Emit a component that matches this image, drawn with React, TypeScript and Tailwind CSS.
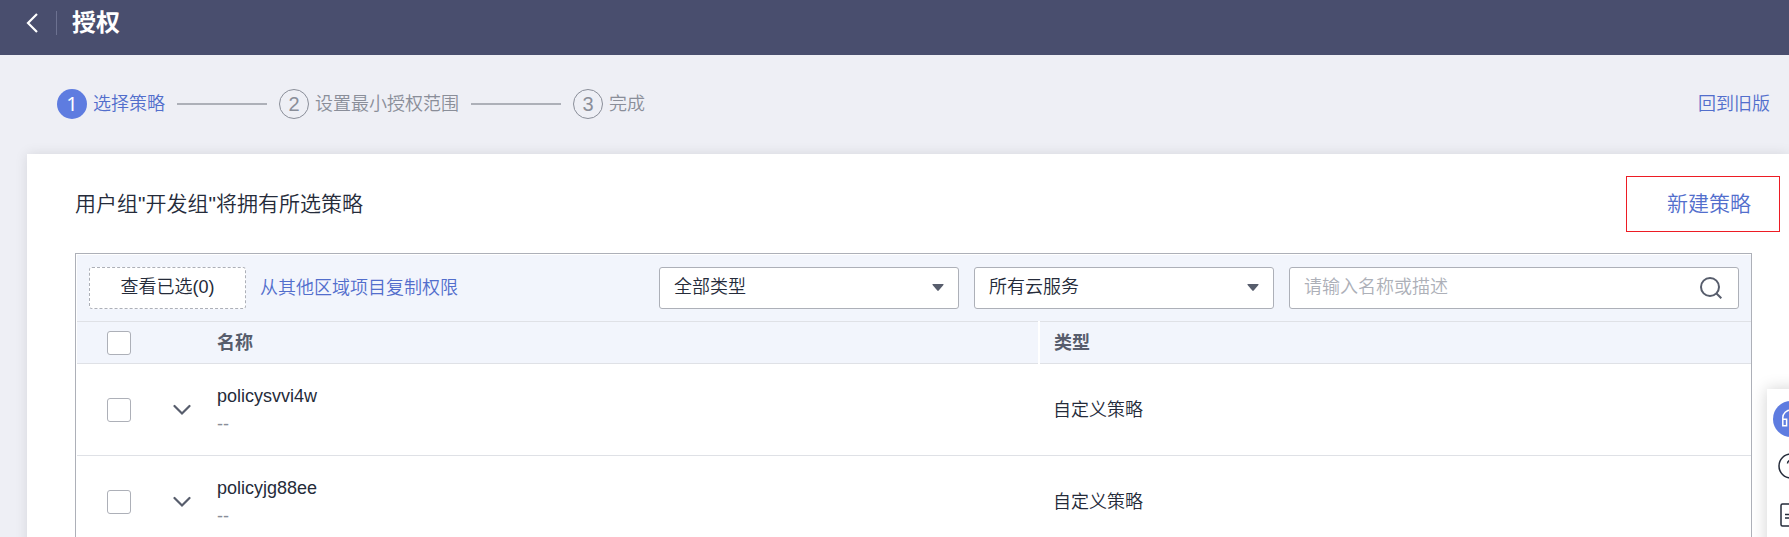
import React from "react";

const policies = [
  { name: "policysvvi4w", description: "--", type: "自定义策略" },
  { name: "policyjg88ee", description: "--", type: "自定义策略" },
];

const steps = ["选择策略", "设置最小授权范围", "完成"];

function Checkbox({ label }: { label: string }) {
  return (
    <input
      type="checkbox"
      aria-label={label}
      className="block size-6 appearance-none rounded-[3px] border border-[#adb0b8] bg-white checked:border-[#5e7ce0] checked:bg-[#5e7ce0]"
    />
  );
}

function Filter({ label, value }: { label: string; value: string }) {
  return (
    <div className="relative w-[300px] min-w-0">
      <select
        aria-label={label}
        className="h-[42px] w-full appearance-none rounded-[3px] border border-[#adb0b8] bg-white pr-10 pb-0.5 pl-3.5 text-[#252b3a]"
      >
        <option>{value}</option>
      </select>
      <svg
        className="pointer-events-none absolute top-[17px] right-[15px] h-[7px] w-3"
        viewBox="0 0 12 7"
        fill="#575d6c"
      >
        <path d="M1 0h10q1 0 .4.9L6.7 6.5q-.7.8-1.4 0L.6.9Q0 0 1 0Z" />
      </svg>
    </div>
  );
}

function Steps() {
  return (
    <ol className="flex items-center gap-3">
      {steps.map((step, i) => (
        <React.Fragment key={step}>
          {i > 0 && <li aria-hidden="true" className="h-0.5 w-[90px] bg-[#adb0b8]" />}
          <li
            className={
              i === 0
                ? "flex items-center gap-1.5 text-[#526ecc]"
                : "flex items-center gap-1.5 text-[#8a8e99]"
            }
          >
            <span
              className={
                i === 0
                  ? "flex size-[30px] items-center justify-center rounded-full bg-[#5e7ce0] font-['Noto_Sans',sans-serif] text-xl leading-none font-normal text-white"
                  : "flex size-[30px] items-center justify-center rounded-full border border-[#8a8e99] text-xl leading-none"
              }
            >
              {i + 1}
            </span>
            <span>{step}</span>
          </li>
        </React.Fragment>
      ))}
    </ol>
  );
}

function SideTools() {
  return (
    <aside className="fixed top-[389px] -right-[26px] flex h-[180px] w-12 flex-col items-center bg-white pt-3 text-[#252b3a] shadow-[0_0_16px_rgba(0,0,0,0.18)]">
      <button
        aria-label="客服"
        className="flex size-9 items-center justify-center rounded-full bg-[#5e7ce0] text-white"
      >
        <svg className="size-5" viewBox="0 0 20 20" fill="none" stroke="currentColor" strokeWidth="1.5">
          <path d="M1.8 16.5V8.8a8.2 7.8 0 0 1 16.4 0v7.7M1.8 10.2h3.8v6.6H1.8zM14.4 10.2h3.8v6.6h-3.8z" />
        </svg>
      </button>
      <button aria-label="帮助" className="mt-4">
        <svg className="size-[26px]" viewBox="0 0 26 26" fill="none" stroke="currentColor" strokeWidth="1.5">
          <circle cx="13" cy="13" r="12" />
          <path d="M9.5 10.5a3.5 3.5 0 1 1 5.6 2.8c-1.3.9-2.1 1.5-2.1 3.2M13 18.5V20" />
        </svg>
      </button>
      <button aria-label="反馈" className="mt-6">
        <svg className="h-6 w-[22px]" viewBox="0 0 22 24" fill="none" stroke="currentColor" strokeWidth="1.5">
          <rect x="1" y="1" width="20" height="22" rx="1.5" />
          <path d="M5 11.5h8M5 15h8" />
        </svg>
      </button>
    </aside>
  );
}

export default function App() {
  return (
    <div className="flex h-screen flex-col overflow-hidden bg-[#eeeff5] font-['Liberation_Sans','Noto_Sans_CJK_SC',sans-serif] text-lg leading-7 font-[350] text-[#252b3a]">
      <header className="flex h-[55px] shrink-0 items-center bg-[#494e6e] pb-2.5 pl-[26px] text-white">
        <a href="#back" aria-label="返回">
          <svg className="h-5 w-3" viewBox="0 0 12 20" fill="none" stroke="currentColor" strokeWidth="2.2">
            <path d="M11 1 2 10l9 9" />
          </svg>
        </a>
        <span className="ml-[18px] h-6 w-px bg-[#6c7190]" />
        <h1 className="ml-[15px] text-2xl leading-8 font-bold">授权</h1>
      </header>

      <div className="flex h-[99px] shrink-0 items-center justify-between pr-[19px] pb-0.5 pl-[57px]">
        <Steps />
        <a href="#old" className="text-[#526ecc]">
          回到旧版
        </a>
      </div>

      <main className="ml-[27px] flex-1 bg-white pt-[22px] pr-[37px] pl-12 shadow-[0_0_12px_rgba(0,0,0,0.1)]">
        <div className="-mr-7 flex items-center justify-between">
          <h2 className="text-[21px]">用户组"开发组"将拥有所选策略</h2>
          <a
            href="#new"
            className="flex h-14 items-center border border-[#ed1c24] pr-7 pl-10 text-[21px] text-[#526ecc]"
          >
            新建策略
          </a>
        </div>

        <section className="mt-[21px] border border-[#adb0b8] pt-px pl-px">
          <div className="flex items-center bg-[#f2f5fc] px-3 py-3">
            <button className="h-[42px] w-[157px] shrink-0 rounded-[3px] border border-dashed border-[#adb0b8] bg-white pb-0.5">
              查看已选(0)
            </button>
            <a href="#copy" className="ml-3.5 whitespace-nowrap text-[#526ecc]">
              从其他区域项目复制权限
            </a>
            <div className="ml-auto flex gap-[15px]">
              <Filter label="类型" value="全部类型" />
              <Filter label="云服务" value="所有云服务" />
              <label className="flex h-[42px] w-[450px] items-center rounded-[3px] border border-[#adb0b8] bg-white pr-4 pl-3.5">
                <input
                  type="text"
                  aria-label="搜索"
                  placeholder="请输入名称或描述"
                  className="min-w-0 flex-1 pb-0.5 outline-none placeholder:text-[#adb0b8]"
                />
                <svg className="size-[22px]" viewBox="0 0 22 22" fill="none" stroke="#575d6c" strokeWidth="2">
                  <circle cx="10" cy="10" r="9" />
                  <path d="m16.5 16.5 4.8 4.8" />
                </svg>
              </label>
            </div>
          </div>

          <table className="w-full table-fixed border-collapse text-left">
            <colgroup>
              <col className="w-[78px]" />
              <col className="w-[62px]" />
              <col />
              <col className="w-[712px]" />
            </colgroup>
            <thead>
              <tr className="h-[42px] border-y border-[#dfe1e6] bg-[#f2f5fc] text-[#575d6c]">
                <th className="pl-[30px]">
                  <Checkbox label="全选" />
                </th>
                <th />
                <th className="font-bold">名称</th>
                <th className="border-l-2 border-white pl-3.5 font-bold">类型</th>
              </tr>
            </thead>
            <tbody>
              {policies.map((policy) => (
                <tr key={policy.name} className="h-[92px] border-b border-[#dfe1e6]">
                  <td className="pl-[30px]">
                    <Checkbox label={policy.name} />
                  </td>
                  <td className="pl-[18px]">
                    <button aria-label="展开" className="block">
                      <svg className="h-3 w-[18px]" viewBox="0 0 18 12" fill="none" stroke="#575d6c" strokeWidth="2.2" strokeLinecap="round">
                        <path d="m1.5 2 7.5 7.5L16.5 2" />
                      </svg>
                    </button>
                  </td>
                  <td>
                    <div>{policy.name}</div>
                    <div className="text-[#8a8e99]">{policy.description}</div>
                  </td>
                  <td className="pl-3.5">{policy.type}</td>
                </tr>
              ))}
            </tbody>
          </table>
        </section>
      </main>

      <SideTools />
    </div>
  );
}
